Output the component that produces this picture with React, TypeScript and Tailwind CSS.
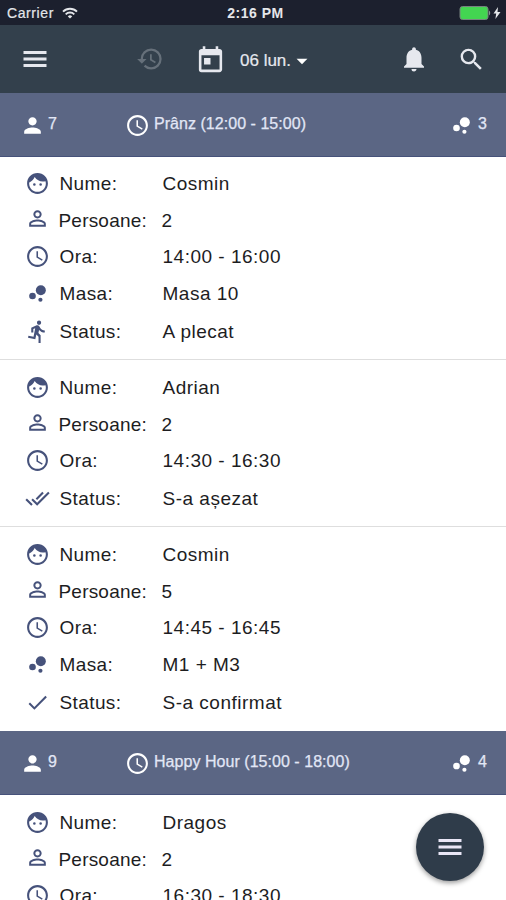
import type { IconType } from "react-icons";
import {
  MdAccessTime,
  MdArrowDropDown,
  MdBubbleChart,
  MdDirectionsRun,
  MdDone,
  MdDoneAll,
  MdFace,
  MdHistory,
  MdNotifications,
  MdPermIdentity,
  MdPerson,
  MdSearch,
  MdToday,
} from "react-icons/md";

type Reservation = {
  name: string;
  guests: number;
  time: string;
  table?: string;
  status: string;
  statusIcon: IconType;
  spacing: string;
};

const lunch: Reservation[] = [
  { name: "Cosmin", guests: 2, time: "14:00 - 16:00", table: "Masa 10", status: "A plecat", statusIcon: MdDirectionsRun, spacing: "pt-[8px] pb-[9px]" },
  { name: "Adrian", guests: 2, time: "14:30 - 16:30", status: "S-a așezat", statusIcon: MdDoneAll, spacing: "pt-[9px] pb-[9px]" },
  { name: "Cosmin", guests: 5, time: "14:45 - 16:45", table: "M1 + M3", status: "S-a confirmat", statusIcon: MdDone, spacing: "pt-[9px] pb-[10px]" },
];

const happyHour: Reservation[] = [
  { name: "Dragos", guests: 2, time: "16:30 - 18:30", status: "S-a confirmat", statusIcon: MdDone, spacing: "pt-[9px] pb-[9px]" },
];

function MenuIcon() {
  return (
    <svg width="24" height="18" viewBox="0 0 24 18" fill="currentColor">
      <rect x="0.5" y="1" width="23" height="3" />
      <rect x="0.5" y="7.5" width="23" height="3" />
      <rect x="0.5" y="14" width="23" height="3" />
    </svg>
  );
}

function StatusBar() {
  return (
    <div className="grid h-[25px] shrink-0 grid-cols-3 items-center bg-[#1c202e] pr-[5px] pl-[7px] text-[14px] text-[#e4e6ea]">
      <div className="flex items-center gap-[8px] pt-[2px]">
        <span className="tracking-[0.6px] [-webkit-text-stroke:0.2px]">Carrier</span>
        <svg width="16" height="12" viewBox="0 0 16 12" fill="none" stroke="currentColor" strokeWidth="1.9" className="mb-[2px]">
          <path d="M1 4.6a10 10 0 0 1 14 0" />
          <path d="M3.7 7.3a6.1 6.1 0 0 1 8.6 0" />
          <path d="M8 11.6 5.8 9.4a3.1 3.1 0 0 1 4.4 0z" fill="currentColor" stroke="none" />
        </svg>
      </div>
      <div className="pt-[2px] pl-[3px] text-center font-bold tracking-[0.5px] whitespace-nowrap">2:16 PM</div>
      <div className="flex items-center justify-end gap-[2px] pt-px">
        <svg width="32" height="14" viewBox="0 0 32 14">
          <rect x="1" y="0.5" width="28" height="13" rx="2.5" fill="#43d551" stroke="#77827f" />
          <path d="M30 4.5c1.6.8 1.6 4.2 0 5z" fill="#8b9297" />
        </svg>
        <svg width="8" height="12" viewBox="0 0 8 12" fill="currentColor">
          <path d="M5 0 0.5 6.6h2.7L2.4 12 7.5 4.9H4.5z" />
        </svg>
      </div>
    </div>
  );
}

function Toolbar() {
  return (
    <header className="flex h-[68px] shrink-0 items-center bg-[#33404c] pr-5 pl-[23px] text-[#e6e8ee]">
      <MenuIcon />
      <MdHistory className="ml-[89px] size-[28px] text-[#66707a]" />
      <MdToday className="mt-[3px] ml-[31px] size-[31px]" />
      <button className="ml-[14px] flex items-center pt-1 text-[17px] [-webkit-text-stroke:0.2px]">
        <span>06 lun.</span>
        <MdArrowDropDown className="-ml-[2px] size-[26px] text-white" />
      </button>
      <MdNotifications className="ml-auto size-[30px]" />
      <MdSearch className="ml-[28px] size-[29px]" />
    </header>
  );
}

type SectionProps = { guests: number; title: string; tables: number };

function SectionHeader({ guests, title, tables }: SectionProps) {
  return (
    <div className="flex h-[64px] shrink-0 items-center border-b border-[#46527a] bg-[#5b6684] pr-[19px] pl-5 text-[16px] text-[#e2e7f6] [-webkit-text-stroke:0.25px]">
      <div className="flex w-[105px] items-center gap-[3px]">
        <MdPerson className="mt-[2px] size-[25px] text-white" />
        <span className="mb-[2px]">{guests}</span>
      </div>
      <div className="flex items-center gap-[4px]">
        <MdAccessTime className="mt-[2px] size-[25px] text-white" />
        <span className="mb-[2px] tracking-[0.04px]">{title}</span>
      </div>
      <div className="ml-auto flex items-center gap-[4px]">
        <MdBubbleChart className="mt-[2px] size-[25px] text-white" />
        <span className="mb-[2px]">{tables}</span>
      </div>
    </div>
  );
}

type FieldProps = { icon: IconType; label: string; value: string | number };

function Field({ icon: Icon, label, value }: FieldProps) {
  return (
    <div className="flex h-[37px] items-center">
      <Icon className="mr-[10px] size-[25px] text-[#46527b]" />
      <span className="w-[103px] pt-px">{label}</span>
      <span className="pt-px tracking-[0.5px]">{value}</span>
    </div>
  );
}

function GuestsField({ guests }: { guests: number }) {
  return (
    <div className="flex h-[37px] items-center">
      <MdPermIdentity className="mr-[9px] mb-[5px] size-[25px] text-[#46527b]" />
      <span className="w-[103px] pt-[2px] tracking-[0.2px]">Persoane:</span>
      <span className="pt-[2px]">{guests}</span>
    </div>
  );
}

function ReservationCard({ item }: { item: Reservation }) {
  return (
    <div
      className={`shrink-0 border-b border-[#dedede] pl-[24.5px] text-[19px] tracking-[0.4px] text-[#1d1d1f] last:border-b-0 ${item.spacing}`}
    >
      <Field icon={MdFace} label="Nume:" value={item.name} />
      <GuestsField guests={item.guests} />
      <div className="-mt-px mb-px">
        <Field icon={MdAccessTime} label="Ora:" value={item.time} />
        {item.table && <Field icon={MdBubbleChart} label="Masa:" value={item.table} />}
      </div>
      <Field icon={item.statusIcon} label="Status:" value={item.status} />
    </div>
  );
}

export default function App() {
  return (
    <div className="relative flex h-[900px] w-[506px] flex-col overflow-hidden bg-white font-['Liberation_Sans',Arial,sans-serif]">
      <StatusBar />
      <Toolbar />
      <main className="flex flex-col">
        <SectionHeader guests={7} title="Prânz (12:00 - 15:00)" tables={3} />
        <div>
          {lunch.map((item) => (
            <ReservationCard key={item.time} item={item} />
          ))}
        </div>
        <SectionHeader guests={9} title="Happy Hour (15:00 - 18:00)" tables={4} />
        <div>
          {happyHour.map((item) => (
            <ReservationCard key={item.time} item={item} />
          ))}
        </div>
      </main>

      {/* Floating menu button */}
      <button className="absolute right-[22px] bottom-[19px] flex size-[68px] items-center justify-center rounded-full bg-[#2f3c4a] text-[#e9e6f6] shadow-[0_2px_5px_rgba(0,0,0,0.4)]">
        <MenuIcon />
      </button>
    </div>
  );
}
